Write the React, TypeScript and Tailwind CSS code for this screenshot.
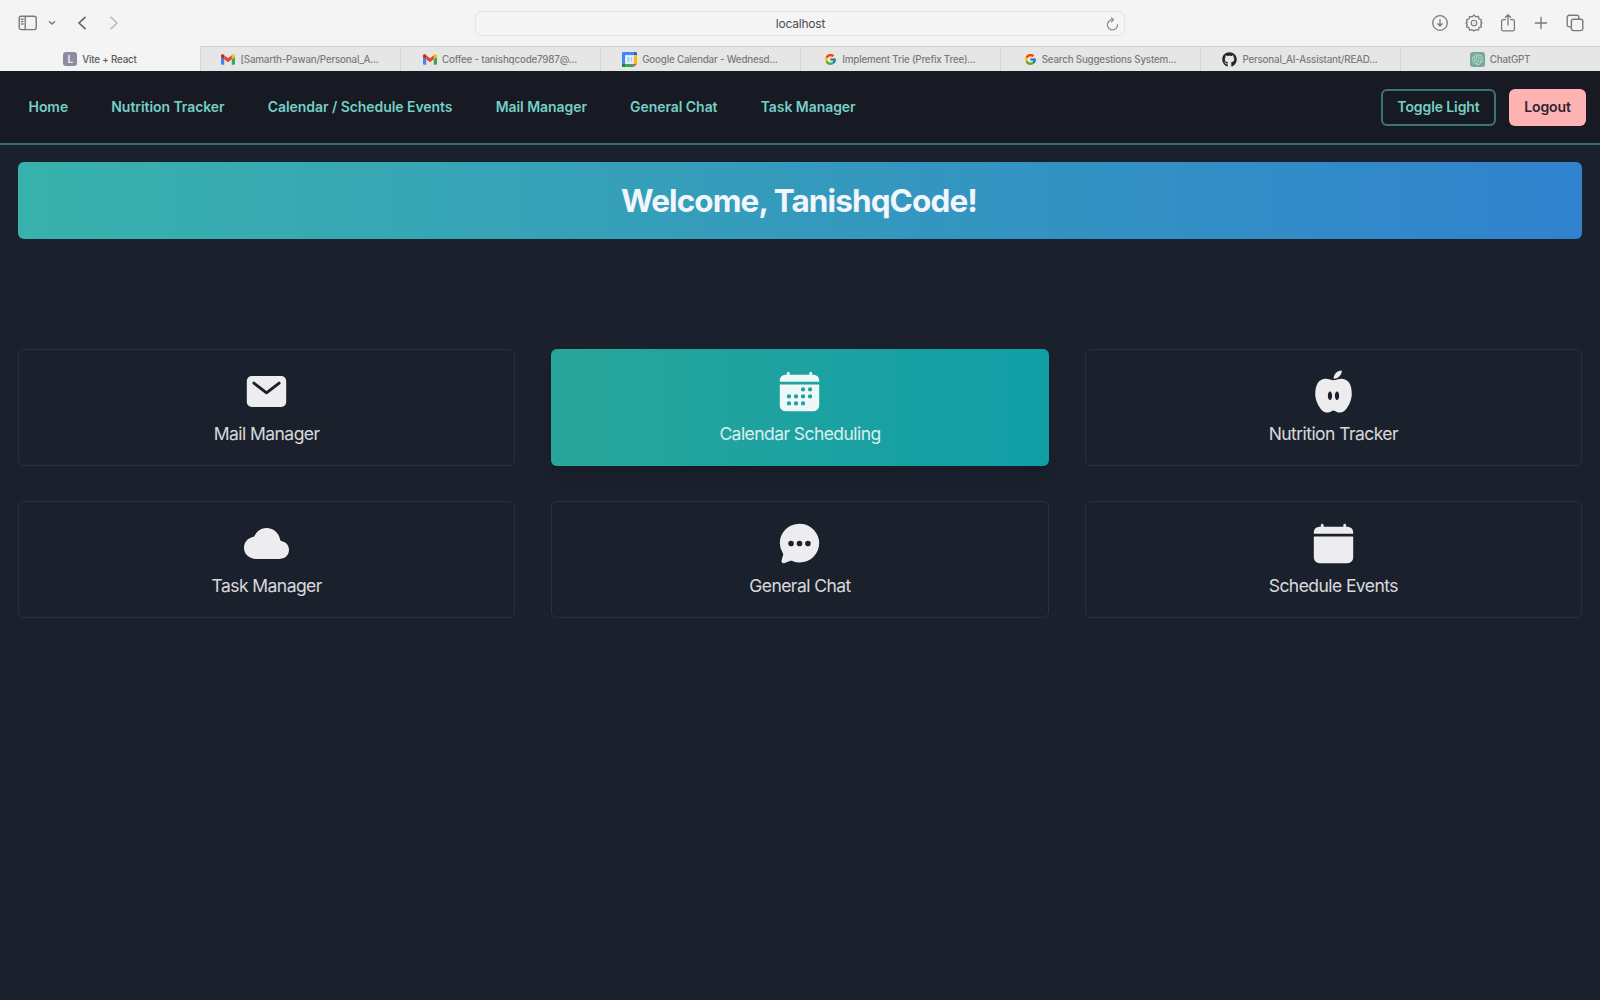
import type { ReactNode } from 'react';
import {
  IoMail,
  IoCalendar,
  IoNutrition,
  IoCloud,
  IoChatbubbleEllipses,
  IoCalendarClear,
} from 'react-icons/io5';
import { FaGithub } from 'react-icons/fa';
import { FcGoogle } from 'react-icons/fc';
import { SiOpenai } from 'react-icons/si';

const stroke = {
  fill: 'none',
  stroke: 'currentColor',
  strokeLinecap: 'round',
  strokeLinejoin: 'round',
} as const;

function SidebarIcon() {
  return (
    <svg width="20" height="16" viewBox="0 0 20 16" {...stroke} strokeWidth="1.4">
      <rect x="1.2" y="1.2" width="17" height="13.4" rx="2" />
      <path d="M7.2 1.2v13.4M3.4 4.2h1.6M3.4 6.6h1.6M3.4 9h1.6" />
    </svg>
  );
}

function GearIcon() {
  return (
    <svg width="18" height="18" viewBox="0 0 18 18" {...stroke} strokeWidth="1.3">
      <path d="M9 1l1.800 1.900 2.600-.5.600 2.600 2.500.9-.7 2.300L17 9l-1.200 1.500.7 2.300-2.500.8-.6 2.500-2.600-.4L9 17l-1.800-1.300-2.600.4-.6-2.500-2.500-.8.7-2.300L1 9l1.200-.8-.7-2.300L4 5l.6-2.600 2.600.5z" />
      <circle cx="9" cy="9" r="2.800" strokeWidth="1.100" />
      <circle cx="9" cy="9" r="0.600" fill="currentColor" stroke="none" />
    </svg>
  );
}

function DownloadIcon() {
  return (
    <svg width="18" height="18" viewBox="0 0 18 18" {...stroke} strokeWidth="1.3">
      <circle cx="9" cy="9" r="7.3" />
      <path d="M9 5.600v6.300M6.800 9.800L9 12l2.200-2.200" />
    </svg>
  );
}

function ShareIcon() {
  return (
    <svg width="16" height="20" viewBox="0 0 16 20" {...stroke} strokeWidth="1.3">
      <path d="M5.3 6.6H3.2A1.6 1.6 0 0 0 1.6 8.2v8a1.6 1.6 0 0 0 1.6 1.6h9.6a1.6 1.6 0 0 0 1.6-1.6v-8a1.6 1.6 0 0 0-1.6-1.6h-2.1" />
      <path d="M8 12V2M5.3 4.5L8 1.8l2.7 2.7" />
    </svg>
  );
}

function PlusIcon() {
  return (
    <svg width="14" height="14" viewBox="0 0 14 14" {...stroke} strokeWidth="1.4">
      <path d="M7 1.4v11.2M1.4 7h11.2" />
    </svg>
  );
}

function TabsIcon() {
  return (
    <svg width="18" height="18" viewBox="0 0 18 18" {...stroke} strokeWidth="1.4">
      <rect x="5.4" y="5.2" width="11.4" height="11.4" rx="2" />
      <path d="M5.4 12.9H3.2a2 2 0 0 1-2-2V3.3a2 2 0 0 1 2-2h7.6a2 2 0 0 1 2 2v1.9" />
    </svg>
  );
}

function ReloadIcon() {
  return (
    <svg width="13" height="14" viewBox="0 0 13 14" {...stroke} strokeWidth="1.2">
      <path d="M11.6 7.6A5.1 5.1 0 1 1 6.5 2.7" />
      <path d="M5.4.9l2 1.9-2 2" />
    </svg>
  );
}

function GmailIcon() {
  return (
    <svg width="14" height="11" viewBox="0 0 24 18">
      <path fill="#4285f4" d="M1.600 18h3.900V8.700L0 4.600v11.800C0 17.300.7 18 1.600 18z" />
      <path fill="#34a853" d="M18.500 18h3.900c.9 0 1.600-.7 1.600-1.600V4.600l-5.500 4.100z" />
      <path fill="#fbbc04" d="M18.500 1.800v6.900L24 4.600V2.500C24 .4 21.600-.7 20 .5z" />
      <path fill="#ea4335" d="M5.500 8.700V1.800L12 6.700l6.500-4.900v6.900L12 13.600z" />
      <path fill="#c5221f" d="M0 2.500v2.100l5.500 4.100V1.800L4 .5C2.400-.7 0 .4 0 2.500z" />
    </svg>
  );
}

function GoogleCalendarIcon() {
  return (
    <svg width="15" height="15" viewBox="0 0 14 14">
      <path fill="#4285f4" d="M1.200 0H11v3H3v8H0V1.200A1.200 1.200 0 0 1 1.200 0z" />
      <path fill="#1967d2" d="M11 0h1.800A1.200 1.200 0 0 1 14 1.200V3h-3z" />
      <path fill="#fbbc04" d="M11 3h3v8h-3z" />
      <path fill="#34a853" d="M3 11h8v3H3z" />
      <path fill="#188038" d="M0 11h3v3H1.200A1.200 1.200 0 0 1 0 12.800z" />
      <path fill="#ea4335" d="M11 11h3l-3 3z" />
      <path fill="#e6effc" d="M3 3h8v8H3z" />
      <path fill="none" stroke="#8fb5f6" strokeWidth="0.8" d="M4.800 5.400h1.700v3.400H4.800M6.500 7H5.300M8 5.800l1-.5v3.500" />
    </svg>
  );
}

type Tab = { label: string; icon: ReactNode; active?: boolean };

const tabs: Tab[] = [
  {
    label: 'Vite + React',
    active: true,
    icon: (
      <span className="flex size-3.5 items-center justify-center rounded-[3px] bg-[#8d8c9f] text-[10px] leading-none font-bold text-[#e6e6ee]">
        L
      </span>
    ),
  },
  { label: '[Samarth-Pawan/Personal_A...', icon: <GmailIcon /> },
  { label: 'Coffee - tanishqcode7987@...', icon: <GmailIcon /> },
  { label: 'Google Calendar - Wednesd...', icon: <GoogleCalendarIcon /> },
  { label: 'Implement Trie (Prefix Tree)...', icon: <FcGoogle size={13} /> },
  { label: 'Search Suggestions System...', icon: <FcGoogle size={13} /> },
  {
    label: 'Personal_AI-Assistant/READ...',
    icon: <FaGithub size={15} className="text-[#22262c]" />,
  },
  {
    label: 'ChatGPT',
    icon: (
      <span className="flex size-[15px] items-center justify-center rounded-[3px] bg-[#74aa9c] text-[#c3ddd5]">
        <SiOpenai size={11} />
      </span>
    ),
  },
];

const links = [
  'Home',
  'Nutrition Tracker',
  'Calendar / Schedule Events',
  'Mail Manager',
  'General Chat',
  'Task Manager',
];

const cards = [
  { label: 'Mail Manager', Icon: IoMail },
  { label: 'Calendar Scheduling', Icon: IoCalendar, active: true },
  { label: 'Nutrition Tracker', Icon: IoNutrition },
  { label: 'Task Manager', Icon: IoCloud },
  { label: 'General Chat', Icon: IoChatbubbleEllipses },
  { label: 'Schedule Events', Icon: IoCalendarClear },
];

function Toolbar() {
  return (
    <div className="grid h-[46px] grid-cols-[1fr_650px_1fr] items-center text-[#7a7a7a]">
      <div className="flex items-center pl-[17.500px]">
        <SidebarIcon />
        <svg className="ml-[10.500px]" width="8" height="6" viewBox="0 0 8 6" {...stroke} strokeWidth="1.5">
          <path d="M1.400 1.700L4 4l2.600-2.300" />
        </svg>
        <svg className="ml-[21px] text-[#5e5e5e]" width="10" height="16" viewBox="0 0 10 16" {...stroke} strokeWidth="1.600">
          <path d="M8 2.300L2 8l6 5.700" />
        </svg>
        <svg className="ml-[22px] text-[#b8b8b8]" width="10" height="16" viewBox="0 0 10 16" {...stroke} strokeWidth="1.500">
          <path d="M2 2.300L8 8l-6 5.700" />
        </svg>
      </div>
      <div className="grid h-[25px] grid-cols-[1fr_auto_1fr] items-center rounded-[7px] border border-[#e3e3e3] bg-[#f5f5f5] px-[5px]">
        <span className="col-start-2 pt-px pl-px text-[12px] tracking-[-0.22px] text-[#4c4c4c]">localhost</span>
        <span className="justify-self-end pt-px text-[#8a8a8a]">
          <ReloadIcon />
        </span>
      </div>
      <div className="flex items-center justify-end pr-4">
        <DownloadIcon />
        <span className="ml-4">
          <GearIcon />
        </span>
        <span className="ml-[17px]">
          <ShareIcon />
        </span>
        <span className="ml-[18px]">
          <PlusIcon />
        </span>
        <span className="ml-[18px]">
          <TabsIcon />
        </span>
      </div>
    </div>
  );
}

function TabBar() {
  return (
    <div className="grid h-[25px] grid-cols-8">
      {tabs.map((tab) => (
        <div
          key={tab.label}
          className={
            tab.active
              ? 'flex items-center justify-center gap-[5px] pt-px text-[#5a5a5a]'
              : 'flex items-center justify-center gap-[5px] border-t border-l border-t-[#cfcfcf] border-l-[#d6d6d6] bg-[#e6e6e6] pr-px text-[#7b7b7b]'
          }
        >
          {tab.icon}
          <span className="pt-0.5 text-[9.800px] font-medium tracking-[-0.200px] whitespace-nowrap">{tab.label}</span>
        </div>
      ))}
    </div>
  );
}

export default function App() {
  return (
    <div className="flex h-[1000px] w-[1600px] flex-col overflow-hidden bg-[#1a202c] font-[Inter,sans-serif]">
      <div className="bg-[#f4f4f4]">
        <Toolbar />
        <TabBar />
      </div>

      <header className="flex h-[74px] items-center justify-between border-b-2 border-[#2d7070] bg-[#171923] pr-3.5 pl-[28.500px] text-[14px] font-semibold">
        <nav className="flex gap-[43.200px] pb-px tracking-[-0.060px] text-[#74d0c5]">
          {links.map((link) => (
            <a key={link}>{link}</a>
          ))}
        </nav>
        <div className="flex gap-[13px] tracking-[-0.1px]">
          <button className="h-[37px] w-[115px] rounded-[6px] border-2 border-[#3d7474] pb-0.5 text-[#74d0c5]">
            Toggle Light
          </button>
          <button className="h-[37px] w-[77px] rounded-[6px] bg-[#feb2b2] pb-0.5 text-[#2d2630]">Logout</button>
        </div>
      </header>

      <main className="px-[18px] pt-[17px]">
        <h1 className="flex h-[77px] items-center justify-center rounded-[6px] bg-linear-to-r/srgb from-[#38b2ac] to-[#3182ce] pr-[2px] text-[31.500px] font-bold tracking-[-0.900px] text-[#f0f6fb]">
          Welcome, TanishqCode!
        </h1>

        <div className="mt-[110px] grid grid-cols-3 gap-x-9 gap-y-[35px]">
          {cards.map(({ label, Icon, active }) => (
            <button
              key={label}
              className={
                active
                  ? 'flex h-[117px] flex-col items-center rounded-[6px] bg-linear-to-r/srgb from-[#29a69b] to-[#109ea6] pt-[20px] text-[#eef8f8] shadow-lg'
                  : 'flex h-[117px] flex-col items-center rounded-[6px] border border-[#2a313d] pt-[19px] text-[#ededf0]'
              }
            >
              <Icon size={45} />
              <span className="mt-[6px] text-[17.500px] leading-[27px] tracking-[-0.560px] opacity-90">{label}</span>
            </button>
          ))}
        </div>
      </main>
    </div>
  );
}
